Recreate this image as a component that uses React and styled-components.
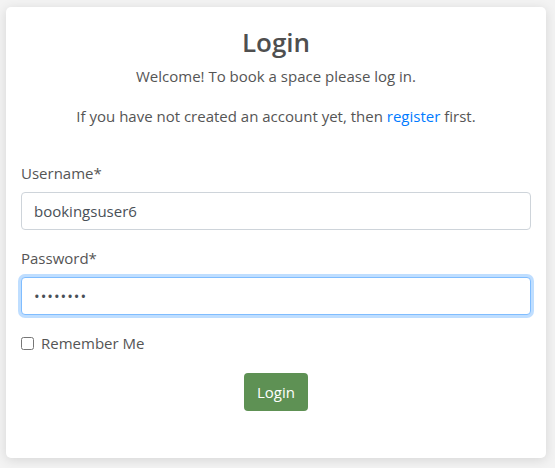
import React from 'react';
import styled, { createGlobalStyle } from 'styled-components';

const GlobalStyle = createGlobalStyle`
  body {
    margin: 0;
    background: #f3f3f3;
    font-family: "Open Sans", "Noto Sans", sans-serif;
  }
`;

const Page = styled.div`
  padding: 7px 9px 10px 6px;
  height: 468px;
  box-sizing: border-box;
`;

const Card = styled.div`
  background: #fff;
  border-radius: 5px;
  box-shadow: 0 2px 12px rgba(0, 0, 0, 0.12);
  padding: 18px 15px 0 15px;
  height: 451px;
  box-sizing: border-box;
  color: #555;
`;

const Title = styled.h1`
  font-size: 26px;
  font-weight: 600;
  text-align: center;
  margin: 0 0 5px;
  line-height: 34px;
  color: #4f4f4f;
`;

const Text = styled.p`
  font-size: 15px;
  line-height: 24px;
  text-align: center;
  margin: ${p => p.$last ? '0 0 33px' : '0 0 16px'};
`;

const Link = styled.a`
  color: #007bff;
  text-decoration: none;
`;

const Field = styled.div`
  margin-bottom: 16px;
`;

const Label = styled.label`
  display: block;
  font-size: 15px;
  line-height: 24px;
  margin-bottom: 7px;
`;

const Input = styled.input`
  display: block;
  width: 100%;
  box-sizing: border-box;
  height: 38px;
  padding: 6px 12px;
  font-size: 15px;
  font-family: inherit;
  color: #495057;
  border: 1px solid ${p => p.$focus ? '#80bdff' : '#ced4da'};
  border-radius: 4px;
  outline: none;
  box-shadow: ${p => p.$focus ? '0 0 0 3px rgba(0, 123, 255, 0.25)' : 'none'};
  letter-spacing: ${p => p.type === 'password' ? '1px' : 'normal'};
`;

const CheckRow = styled.div`
  display: flex;
  align-items: center;
  gap: 7px;
  font-size: 15px;
  line-height: 24px;
  margin-top: 0;
`;

const Check = styled.input`
  margin: 0;
  width: 13px;
  height: 13px;
`;

const ButtonRow = styled.div`
  display: flex;
  justify-content: center;
  margin-top: 18px;
`;

const Button = styled.button`
  background: #5e9154;
  color: #fff;
  border: none;
  border-radius: 4px;
  height: 38px;
  padding: 0 13px;
  font-size: 15px;
  font-family: inherit;
`;

export default function App() {
  return (
    <Page>
      <GlobalStyle />
      <Card>
        <Title>Login</Title>
        <Text>Welcome! To book a space please log in.</Text>
        <Text $last>
          If you have not created an account yet, then <Link href="#">register</Link> first.
        </Text>
        <Field>
          <Label>Username*</Label>
          <Input type="text" defaultValue="bookingsuser6" />
        </Field>
        <Field>
          <Label>Password*</Label>
          <Input type="password" defaultValue="password" $focus />
        </Field>
        <CheckRow>
          <Check type="checkbox" />
          <span>Remember Me</span>
        </CheckRow>
        <ButtonRow>
          <Button>Login</Button>
        </ButtonRow>
      </Card>
    </Page>
  );
}
